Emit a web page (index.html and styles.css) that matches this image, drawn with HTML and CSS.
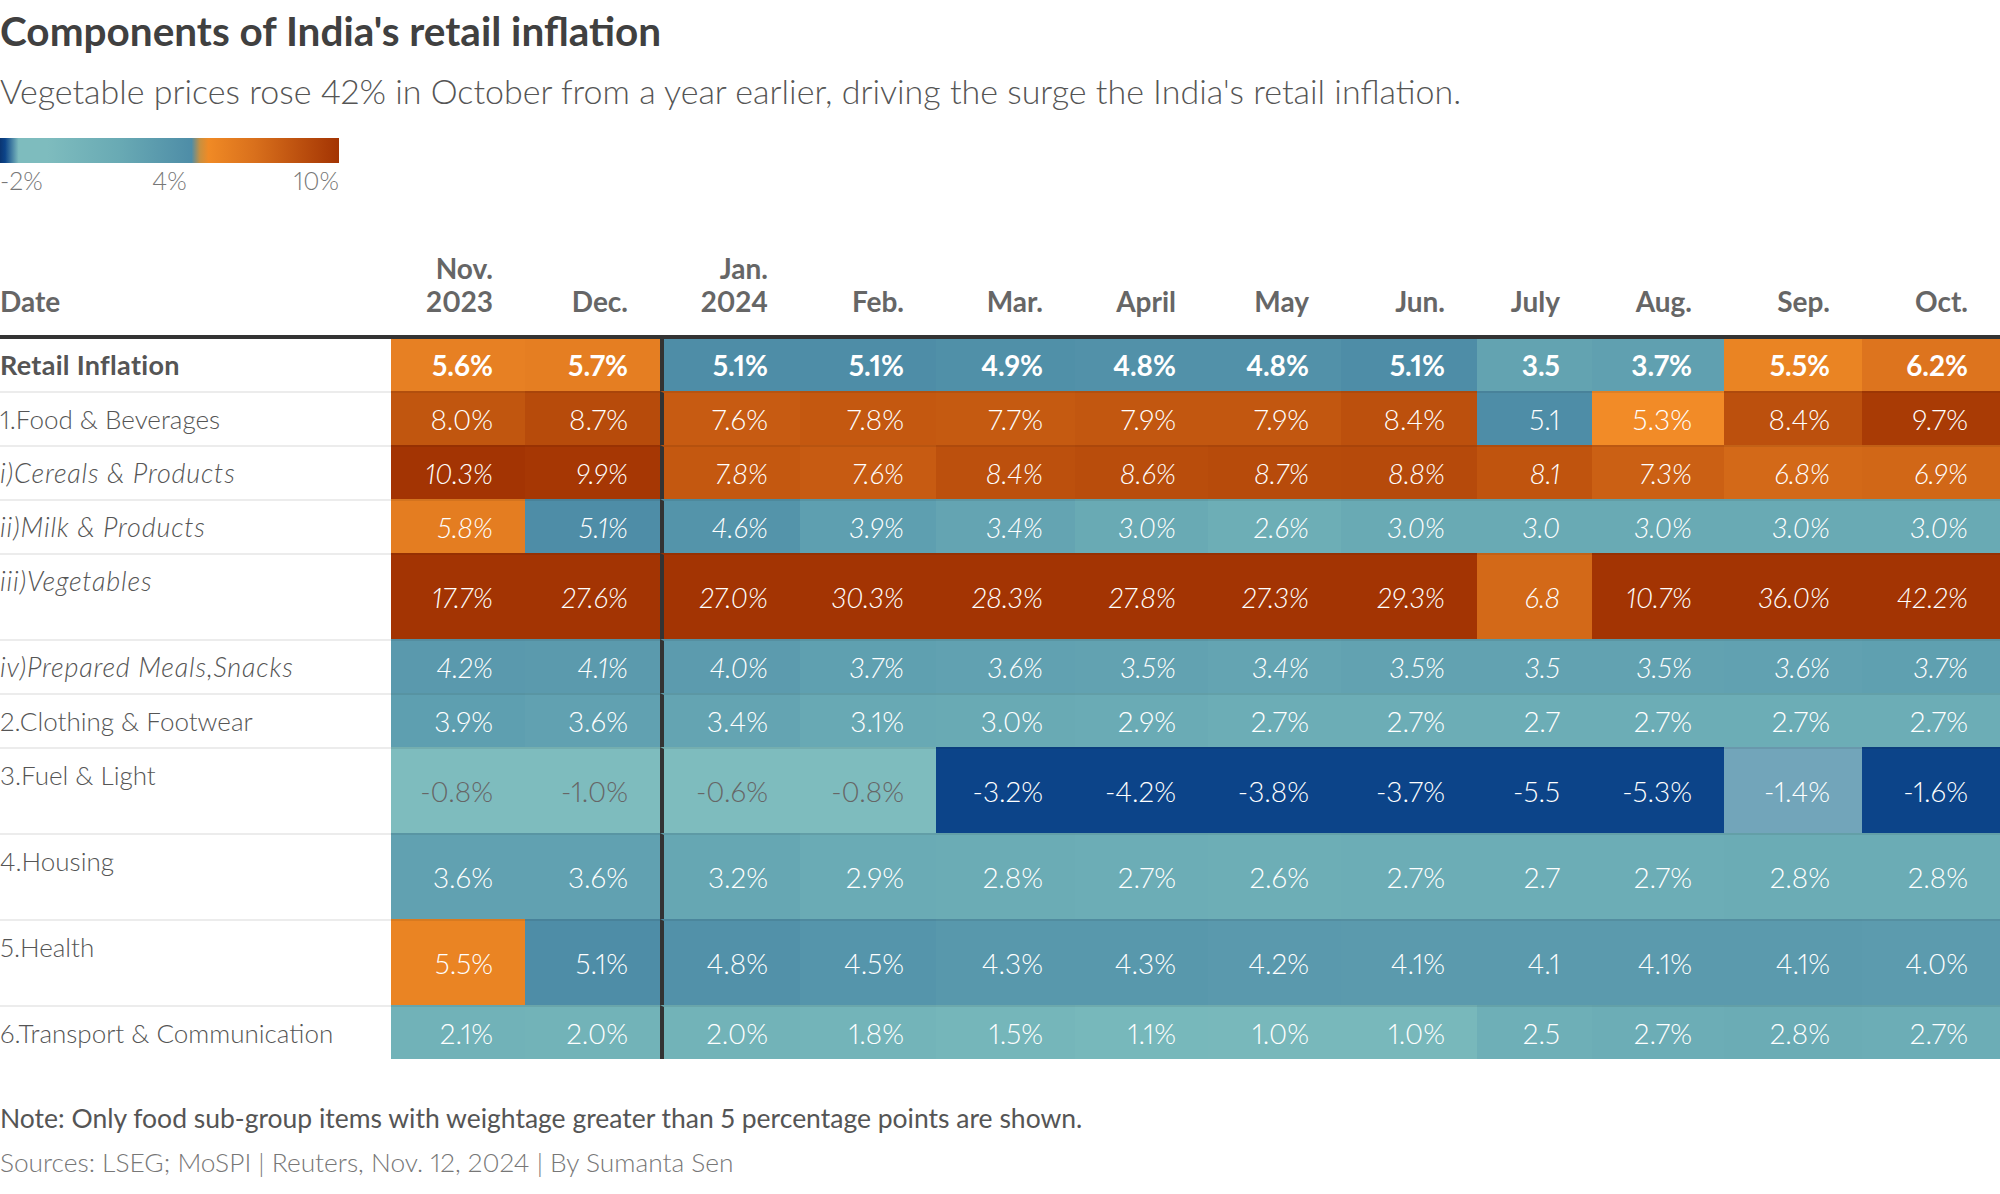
FILE: index.html
```html
<!DOCTYPE html>
<html lang="en">
<head>
<meta charset="utf-8">
<title>Components of India's retail inflation</title>
<link rel="stylesheet" href="styles.css">
</head>
<body>
<div class="chart">
  <h1 class="title">Components of India's retail inflation</h1>
  <p class="subtitle">Vegetable prices rose 42% in October from a year earlier, driving the surge the India's retail inflation.</p>

  <div class="legend">
    <div class="legend-bar"></div>
    <div class="legend-labels"><span>-2%</span><span class="mid">4%</span><span class="end">10%</span></div>
  </div>

  <div class="table">
    <div class="row head">
      <div class="lbl-h">Date</div>
      <div class="h">Nov.<br>2023</div>
      <div class="h">Dec.</div>
      <div class="h">Jan.<br>2024</div>
      <div class="h">Feb.</div>
      <div class="h">Mar.</div>
      <div class="h">April</div>
      <div class="h">May</div>
      <div class="h">Jun.</div>
      <div class="h">July</div>
      <div class="h">Aug.</div>
      <div class="h">Sep.</div>
      <div class="h">Oct.</div>
    </div>

    <div class="row body first bold">
      <div class="lbl">Retail Inflation</div>
      <div class="v" style="background:#e78023">5.6%</div>
      <div class="v" style="background:#e57e22">5.7%</div>
      <div class="v jan" style="background:#4e8da7">5.1%</div>
      <div class="v" style="background:#4e8da7">5.1%</div>
      <div class="v" style="background:#5090a8">4.9%</div>
      <div class="v" style="background:#5291a9">4.8%</div>
      <div class="v" style="background:#5291a9">4.8%</div>
      <div class="v" style="background:#4e8da7">5.1%</div>
      <div class="v" style="background:#63a3b1">3.5</div>
      <div class="v" style="background:#60a0b0">3.7%</div>
      <div class="v" style="background:#ea8423">5.5%</div>
      <div class="v" style="background:#dd741e">6.2%</div>
    </div>

    <div class="row body">
      <div class="lbl">1.Food &amp; Beverages</div>
      <div class="v" style="background:#c1560f">8.0%</div>
      <div class="v" style="background:#b74b0b">8.7%</div>
      <div class="v jan" style="background:#c75b12">7.6%</div>
      <div class="v" style="background:#c45810">7.8%</div>
      <div class="v" style="background:#c55a11">7.7%</div>
      <div class="v" style="background:#c25710">7.9%</div>
      <div class="v" style="background:#c25710">7.9%</div>
      <div class="v" style="background:#bc500d">8.4%</div>
      <div class="v" style="background:#4e8da7">5.1</div>
      <div class="v" style="background:#f28b27">5.3%</div>
      <div class="v" style="background:#bc500d">8.4%</div>
      <div class="v" style="background:#a93b05">9.7%</div>
    </div>

    <div class="row body it">
      <div class="lbl">i)Cereals &amp; Products</div>
      <div class="v" style="background:#a33403">10.3%</div>
      <div class="v" style="background:#a63704">9.9%</div>
      <div class="v jan" style="background:#c45810">7.8%</div>
      <div class="v" style="background:#c75b12">7.6%</div>
      <div class="v" style="background:#bc500d">8.4%</div>
      <div class="v" style="background:#b94d0c">8.6%</div>
      <div class="v" style="background:#b74b0b">8.7%</div>
      <div class="v" style="background:#b64a0b">8.8%</div>
      <div class="v" style="background:#c0540e">8.1</div>
      <div class="v" style="background:#cb6014">7.3%</div>
      <div class="v" style="background:#d36918">6.8%</div>
      <div class="v" style="background:#d16717">6.9%</div>
    </div>

    <div class="row body it">
      <div class="lbl">ii)Milk &amp; Products</div>
      <div class="v" style="background:#e47d21">5.8%</div>
      <div class="v" style="background:#4e8da7">5.1%</div>
      <div class="v jan" style="background:#5494aa">4.6%</div>
      <div class="v" style="background:#5e9fb0">3.9%</div>
      <div class="v" style="background:#64a4b2">3.4%</div>
      <div class="v" style="background:#69aab4">3.0%</div>
      <div class="v" style="background:#6daeb6">2.6%</div>
      <div class="v" style="background:#69aab4">3.0%</div>
      <div class="v" style="background:#69aab4">3.0</div>
      <div class="v" style="background:#69aab4">3.0%</div>
      <div class="v" style="background:#69aab4">3.0%</div>
      <div class="v" style="background:#69aab4">3.0%</div>
    </div>

    <div class="row body tall it">
      <div class="lbl">iii)Vegetables</div>
      <div class="v" style="background:#a33403">17.7%</div>
      <div class="v" style="background:#a33403">27.6%</div>
      <div class="v jan" style="background:#a33403">27.0%</div>
      <div class="v" style="background:#a33403">30.3%</div>
      <div class="v" style="background:#a33403">28.3%</div>
      <div class="v" style="background:#a33403">27.8%</div>
      <div class="v" style="background:#a33403">27.3%</div>
      <div class="v" style="background:#a33403">29.3%</div>
      <div class="v" style="background:#d36918">6.8</div>
      <div class="v" style="background:#a33403">10.7%</div>
      <div class="v" style="background:#a33403">36.0%</div>
      <div class="v" style="background:#a33403">42.2%</div>
    </div>

    <div class="row body it">
      <div class="lbl">iv)Prepared Meals,Snacks</div>
      <div class="v" style="background:#5a99ad">4.2%</div>
      <div class="v" style="background:#5b9aad">4.1%</div>
      <div class="v jan" style="background:#5c9bae">4.0%</div>
      <div class="v" style="background:#5fa0b0">3.7%</div>
      <div class="v" style="background:#61a1b1">3.6%</div>
      <div class="v" style="background:#62a2b1">3.5%</div>
      <div class="v" style="background:#64a4b2">3.4%</div>
      <div class="v" style="background:#62a2b1">3.5%</div>
      <div class="v" style="background:#62a2b1">3.5</div>
      <div class="v" style="background:#62a2b1">3.5%</div>
      <div class="v" style="background:#61a1b1">3.6%</div>
      <div class="v" style="background:#5fa0b0">3.7%</div>
    </div>

    <div class="row body">
      <div class="lbl">2.Clothing &amp; Footwear</div>
      <div class="v" style="background:#5e9fb0">3.9%</div>
      <div class="v" style="background:#61a1b1">3.6%</div>
      <div class="v jan" style="background:#64a4b2">3.4%</div>
      <div class="v" style="background:#68a9b4">3.1%</div>
      <div class="v" style="background:#69aab4">3.0%</div>
      <div class="v" style="background:#6aabb5">2.9%</div>
      <div class="v" style="background:#6cadb6">2.7%</div>
      <div class="v" style="background:#6cadb6">2.7%</div>
      <div class="v" style="background:#6cadb6">2.7</div>
      <div class="v" style="background:#6cadb6">2.7%</div>
      <div class="v" style="background:#6cadb6">2.7%</div>
      <div class="v" style="background:#6cadb6">2.7%</div>
    </div>

    <div class="row body tall">
      <div class="lbl">3.Fuel &amp; Light</div>
      <div class="v dk" style="background:#7ebcbe">-0.8%</div>
      <div class="v dk" style="background:#7ebcbe">-1.0%</div>
      <div class="v jan dk" style="background:#7ebcbe">-0.6%</div>
      <div class="v dk" style="background:#7ebcbe">-0.8%</div>
      <div class="v" style="background:#0c4489">-3.2%</div>
      <div class="v" style="background:#0c4489">-4.2%</div>
      <div class="v" style="background:#0c4489">-3.8%</div>
      <div class="v" style="background:#0c4489">-3.7%</div>
      <div class="v" style="background:#0c4489">-5.5</div>
      <div class="v" style="background:#0c4489">-5.3%</div>
      <div class="v" style="background:#72a5ba">-1.4%</div>
      <div class="v" style="background:#0c4489">-1.6%</div>
    </div>

    <div class="row body tall">
      <div class="lbl">4.Housing</div>
      <div class="v" style="background:#61a1b1">3.6%</div>
      <div class="v" style="background:#61a1b1">3.6%</div>
      <div class="v jan" style="background:#66a7b3">3.2%</div>
      <div class="v" style="background:#6aabb5">2.9%</div>
      <div class="v" style="background:#6bacb5">2.8%</div>
      <div class="v" style="background:#6cadb6">2.7%</div>
      <div class="v" style="background:#6daeb6">2.6%</div>
      <div class="v" style="background:#6cadb6">2.7%</div>
      <div class="v" style="background:#6cadb6">2.7</div>
      <div class="v" style="background:#6cadb6">2.7%</div>
      <div class="v" style="background:#6bacb5">2.8%</div>
      <div class="v" style="background:#6bacb5">2.8%</div>
    </div>

    <div class="row body tall">
      <div class="lbl">5.Health</div>
      <div class="v" style="background:#ea8423">5.5%</div>
      <div class="v" style="background:#4e8da7">5.1%</div>
      <div class="v jan" style="background:#5291a9">4.8%</div>
      <div class="v" style="background:#5595ab">4.5%</div>
      <div class="v" style="background:#5898ac">4.3%</div>
      <div class="v" style="background:#5898ac">4.3%</div>
      <div class="v" style="background:#5a99ad">4.2%</div>
      <div class="v" style="background:#5b9aad">4.1%</div>
      <div class="v" style="background:#5b9aad">4.1</div>
      <div class="v" style="background:#5b9aad">4.1%</div>
      <div class="v" style="background:#5b9aad">4.1%</div>
      <div class="v" style="background:#5c9bae">4.0%</div>
    </div>

    <div class="row body">
      <div class="lbl">6.Transport &amp; Communication</div>
      <div class="v" style="background:#71b2b8">2.1%</div>
      <div class="v" style="background:#72b3b8">2.0%</div>
      <div class="v jan" style="background:#72b3b8">2.0%</div>
      <div class="v" style="background:#73b4b9">1.8%</div>
      <div class="v" style="background:#75b6ba">1.5%</div>
      <div class="v" style="background:#77b8bb">1.1%</div>
      <div class="v" style="background:#78b8bb">1.0%</div>
      <div class="v" style="background:#78b8bb">1.0%</div>
      <div class="v" style="background:#6eafb7">2.5</div>
      <div class="v" style="background:#6cadb6">2.7%</div>
      <div class="v" style="background:#6bacb5">2.8%</div>
      <div class="v" style="background:#6cadb6">2.7%</div>
    </div>
  </div>

  <p class="note">Note: Only food sub-group items with weightage greater than 5 percentage points are shown.</p>
  <p class="source">Sources: LSEG; MoSPI | Reuters, Nov. 12, 2024 | By Sumanta Sen</p>
</div>
</body>
</html>
```

FILE: styles.css
```css
* {
  box-sizing: border-box;
}

body {
  margin: 0;
  background: #ffffff;
  font-family: Lato, "Noto Sans", "Liberation Sans", sans-serif;
  font-variant-numeric: proportional-nums;
  color: #555555;
}

.chart {
  width: 2000px;
  padding-top: 9px;
}

.title {
  margin: 0;
  font-size: 40.5px;
  line-height: 44px;
  font-weight: 700;
  color: #404040;
}

.subtitle {
  margin: 18px 0 0;
  font-size: 34px;
  line-height: 40px;
  font-weight: 300;
  color: #555555;
}

.legend {
  margin-top: 27px;
  width: 339px;
}

.legend-bar {
  height: 25px;
  background: linear-gradient(to right,
    #0a3572 0%,
    #0c4489 1.5%,
    #7ebcbe 5.5%,
    #7ebcbe 14%,
    #69aab4 35%,
    #4e8da7 56.5%,
    #c9903f 59%,
    #f08a25 61.5%,
    #d9701c 75%,
    #a33403 100%);
}

.legend-labels {
  display: grid;
  grid-template-columns: 1fr 1fr 1fr;
  margin-top: 3px;
  font-size: 25px;
  line-height: 28px;
  font-weight: 300;
  color: #777777;
}

.legend-labels .mid {
  text-align: center;
}

.legend-labels .end {
  text-align: right;
}

.table {
  margin-top: 58px;
}

.row {
  display: grid;
  grid-template-columns: 391px 134px 135px 140px 136px 139px 133px 133px 136px 115px 132px 138px 138px;
}

.head {
  align-items: end;
  padding-bottom: 17px;
  border-bottom: 4px solid #333333;
  font-size: 28px;
  line-height: 33px;
  font-weight: 700;
  color: #666666;
}

.h {
  text-align: right;
  padding-right: 32px;
}

.body {
  height: 54px;
}

.body > div {
  border-top: 2px solid rgba(0, 0, 0, 0.075);
}

.body.first {
  height: 52px;
}

.body.first > div {
  border-top: 0;
}

.body.tall {
  height: 86px;
}

.lbl {
  font-size: 26px;
  line-height: 52px;
  font-weight: 300;
  color: #555555;
  white-space: nowrap;
}

.v {
  display: flex;
  align-items: center;
  justify-content: flex-end;
  padding-right: 32px;
  font-size: 28px;
  font-weight: 300;
  color: #ffffff;
}

.v.jan {
  border-left: 4px solid #333333;
}

.v.dk {
  color: #666666;
}

.bold .lbl {
  font-size: 27px;
  letter-spacing: 0.3px;
  font-weight: 700;
}

.bold .v {
  font-weight: 700;
}

.it .lbl {
  font-style: italic;
  font-size: 27px;
  letter-spacing: 0.8px;
}

.it .v {
  font-style: italic;
}

.note {
  margin: 43px 0 0;
  font-size: 26.5px;
  line-height: 32px;
  font-weight: 400;
  color: #555555;
}

.source {
  margin: 12px 0 0;
  font-size: 26.3px;
  line-height: 32px;
  font-weight: 300;
  color: #777777;
}
```
